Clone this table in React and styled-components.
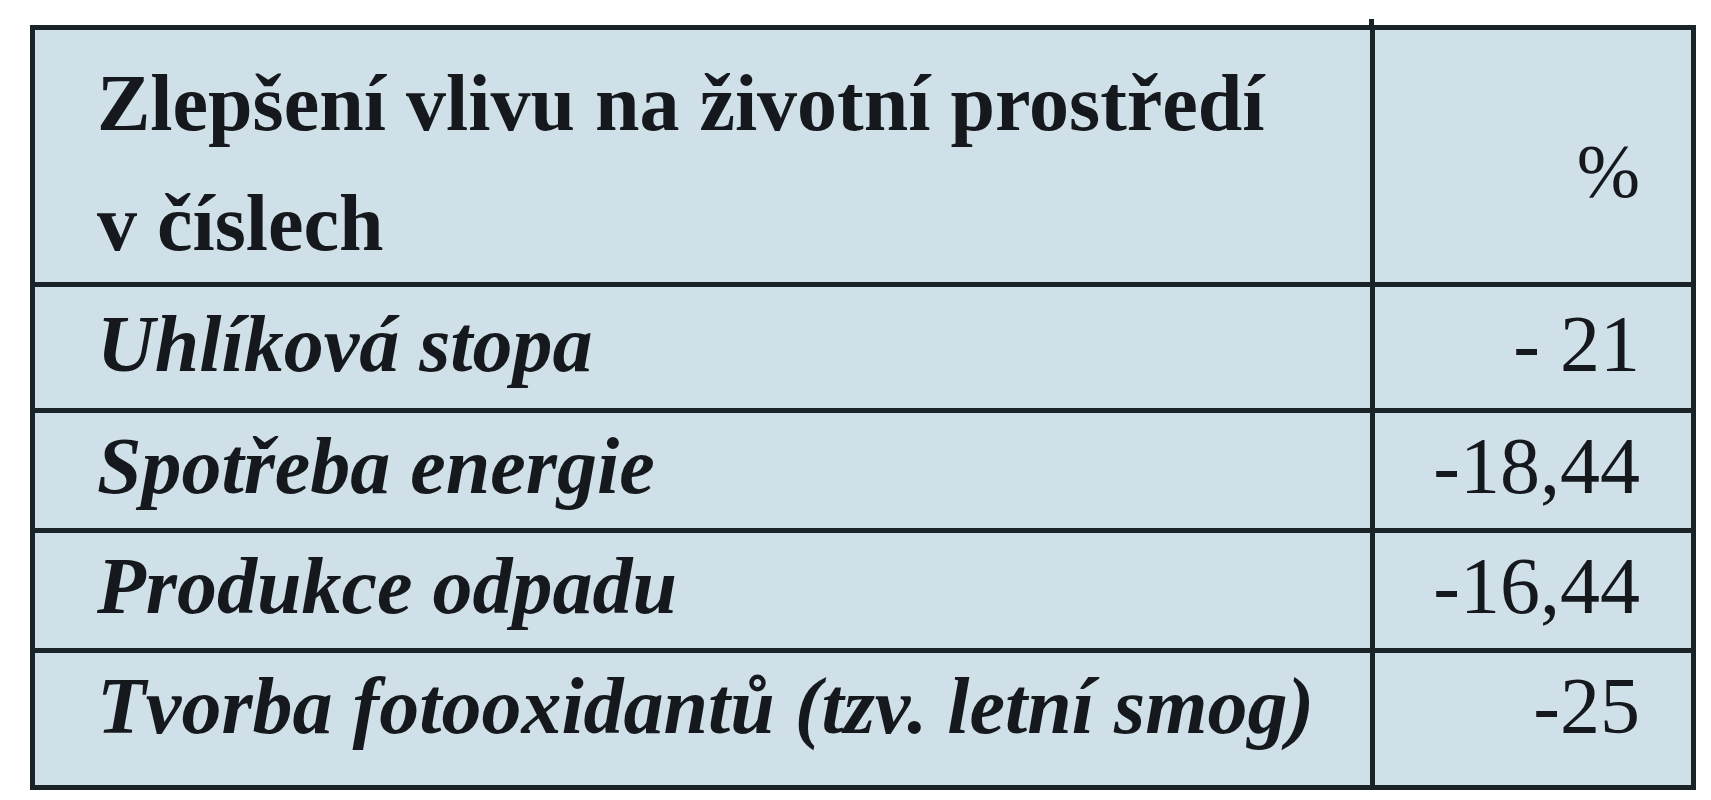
import React from "react";
import styled, { createGlobalStyle } from "styled-components";

const GlobalStyle = createGlobalStyle`
  html, body {
    margin: 0;
    padding: 0;
    background: #ffffff;
  }
  body {
    font-family: "Liberation Serif", "Times New Roman", serif;
    color: #15191d;
  }
`;

const Page = styled.div`
  width: 1711px;
  height: 800px;
  box-sizing: border-box;
  padding: 25px 0 0 30px;
  background: #ffffff;
`;

const Table = styled.div`
  position: relative;
  display: inline-grid;
  grid-template-columns: 1335px 316px;
  grid-template-rows: 252px 121px 115px 115px 132px;
  gap: 5px;
  padding: 5px;
  background: #1a2328;

  &::before {
    content: "";
    position: absolute;
    left: 1339px;
    top: -6px;
    width: 5px;
    height: 6px;
    background: #1a2328;
  }
`;

const Cell = styled.div`
  background: #cfe0e8;
  box-sizing: border-box;
  padding-top: ${(p) => p.$padTop}px;
  padding-left: ${(p) => (p.$right ? 0 : 62)}px;
  padding-right: ${(p) => (p.$right ? 51 : 0)}px;
  text-align: ${(p) => (p.$right ? "right" : "left")};
  font-size: 80px;
  line-height: 80px;
  white-space: nowrap;
`;

const HeaderTitle = styled.div`
  font-weight: 700;
  line-height: 120px;
`;

const Percent = styled.span`
  font-weight: 400;
  font-size: 76px;
`;

const Label = styled.span`
  font-weight: 700;
  font-style: italic;
`;

const Value = styled.span`
  font-weight: 400;
`;

const rows = [
  { label: "Uhlíková stopa", value: "- 21", padTop: 17 },
  { label: "Spotřeba energie", value: "-18,44", padTop: 13 },
  { label: "Produkce odpadu", value: "-16,44", padTop: 13 },
  { label: "Tvorba fotooxidantů (tzv. letní smog)", value: "-25", padTop: 13 },
];

export default function App() {
  return (
    <>
      <GlobalStyle />
      <Page>
        <Table>
          <Cell $padTop={13}>
            <HeaderTitle>
              Zlepšení vlivu na životní prostředí
              <br />v číslech
            </HeaderTitle>
          </Cell>
          <Cell $padTop={100} $right>
            <Percent>%</Percent>
          </Cell>
          {rows.map((r) => (
            <React.Fragment key={r.label}>
              <Cell $padTop={r.padTop}>
                <Label>{r.label}</Label>
              </Cell>
              <Cell $padTop={r.padTop} $right>
                <Value>{r.value}</Value>
              </Cell>
            </React.Fragment>
          ))}
        </Table>
      </Page>
    </>
  );
}
